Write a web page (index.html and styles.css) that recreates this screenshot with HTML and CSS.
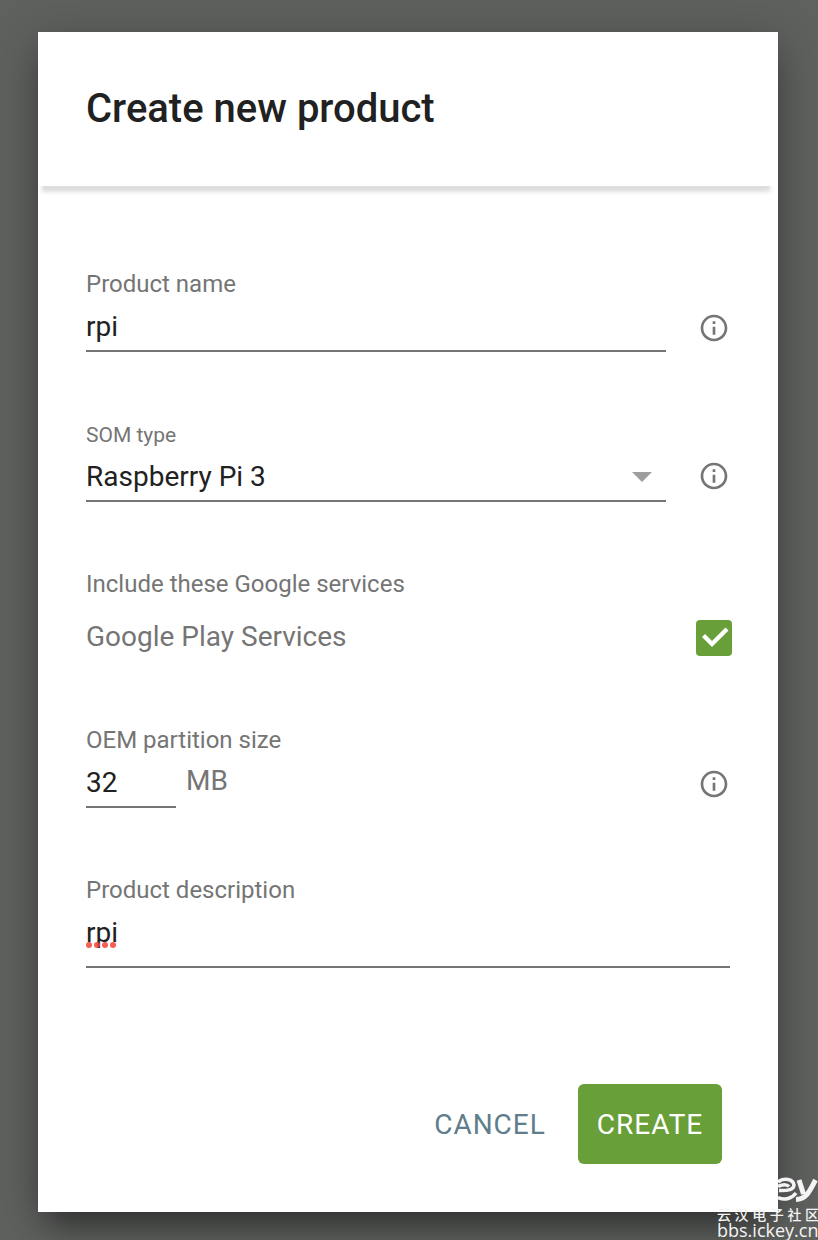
FILE: index.html
```html
<!DOCTYPE html>
<html lang="en">
<head>
<meta charset="utf-8">
<title>Create new product</title>
<link rel="stylesheet" href="styles.css">
</head>
<body>
<svg class="symbols" width="0" height="0">
  <symbol id="info" viewBox="0 0 24 24"><path d="M11 17h2v-6h-2v6zm1-15C6.480 2 2 6.480 2 12s4.480 10 10 10 10-4.480 10-10S17.520 2 12 2zm0 18c-4.410 0-8-3.590-8-8s3.590-8 8-8 8 3.590 8 8-3.590 8-8 8zM11 9h2V7h-2v2z"/></symbol>
</svg>
<main class="dialog">
  <header class="dialog-header"><h1 class="title">Create new product</h1></header>
  <div class="header-shadow"><div class="header-shadow-bar"></div></div>
  <form class="form">
    <div class="field name-field">
      <div class="field-main">
        <div class="label">Product name</div>
        <div class="value">rpi</div>
      </div>
      <svg class="info"><use href="#info"/></svg>
    </div>
    <div class="field som-field">
      <div class="field-main">
        <div class="label label-small">SOM type</div>
        <div class="value select"><span>Raspberry Pi 3</span><svg class="arrow" viewBox="0 0 20 10"><path d="M0 0h20L10 10z"/></svg></div>
      </div>
      <svg class="info info-raised"><use href="#info"/></svg>
    </div>
    <div class="services">
      <div class="label">Include these Google services</div>
      <div class="service-row">
        <span class="service-name">Google Play Services</span>
        <span class="checkbox"><svg viewBox="0 0 36 36"><path d="M7.500 15.500l8.500 8.500L31 9"/></svg></span>
      </div>
    </div>
    <div class="field oem-field">
      <div class="size-main">
        <div class="label">OEM partition size</div>
        <div class="size-row"><div class="value size-value">32</div><span class="unit">MB</span></div>
      </div>
      <svg class="info"><use href="#info"/></svg>
    </div>
    <div class="description">
      <div class="label">Product description</div>
      <div class="value description-value"><span class="misspelled">rpi<svg class="dots" viewBox="0 0 32 6"><circle cx="3" cy="3" r="3"/><circle cx="11" cy="3" r="3"/><circle cx="19" cy="3" r="3"/><circle cx="27" cy="3" r="3"/></svg></span></div>
    </div>
  </form>
  <footer class="actions">
    <button class="button cancel">CANCEL</button>
    <button class="button create">CREATE</button>
  </footer>
</main>
<div class="watermark">
  <svg class="mark" viewBox="0 0 40 30">
    <path class="mark-e" d="M0 6C6 1.500 15 3 16 9C16 13.500 10 15 1 14.500M0 10.500C4 8 9 8 11 10.500M0 21.500C7 24.500 14 22.500 18 17"/>
    <path class="mark-y" d="M21 4l4.500 14M37.500 4C32 14 29 23 18 23.500"/>
  </svg>
  <div class="mark-cn">云汉电子社区</div>
  <div class="mark-url">bbs.ickey.cn</div>
</div>
</body>
</html>
```
FILE: styles.css
```css
* { box-sizing: border-box; }
body {
  margin: 0;
  width: 818px;
  height: 1240px;
  padding: 32px 40px 28px 38px;
  position: relative;
  overflow: hidden;
  background: #5f615f;
  font-family: Roboto, "Liberation Sans", sans-serif;
  color: #212121;
}
.symbols { position: absolute; }
.dialog {
  width: 740px;
  height: 1180px;
  display: flex;
  flex-direction: column;
  background: #fff;
  box-shadow: 0 22px 30px -10px rgba(0,0,0,.4), 0 8px 44px rgba(0,0,0,.24);
}
.dialog-header { height: 154px; padding: 49px 48px 0; }
.title { margin: 0; font-size: 40px; line-height: 56px; font-weight: 500; white-space: nowrap; }
.header-shadow { height: 10px; overflow: hidden; padding: 0 8px 0 4px; }
.header-shadow-bar { height: 3px; margin: 0 1px; background: #dedede; box-shadow: 0 1px 5px 1px #cfcfcf; }
.form { padding: 72px 48px 0; }
.field { display: flex; justify-content: space-between; align-items: flex-end; }
.field-main { width: 580px; }
.label { height: 32px; line-height: 32px; font-size: 24px; color: #757575; white-space: nowrap; }
.label-small { font-size: 21px; }
.value { height: 52px; padding-top: 4px; border-bottom: 2px solid #757575; font-size: 28px; line-height: 46px; white-space: nowrap; }
.info { width: 32px; height: 32px; margin-bottom: 8px; fill: #757575; }
.info-raised { margin-bottom: 10px; }
.som-field { margin-top: 67px; }
.som-field .value { height: 51px; padding-top: 3px; }
.select { display: flex; justify-content: space-between; }
.arrow { width: 20px; height: 10px; margin: 18px 14px 0 0; fill: #9e9e9e; }
.services { margin-top: 66px; }
.service-row { display: flex; justify-content: space-between; align-items: center; height: 36px; margin: 20px -2px 0 0; }
.service-name, .unit { font-size: 28px; line-height: 36px; color: #757575; }
.service-name { padding-bottom: 2px; }
.checkbox { width: 36px; height: 36px; border-radius: 4px; background: #689f38; }
.checkbox svg { display: block; width: 36px; height: 36px; fill: none; stroke: #fff; stroke-width: 4.300; }
.oem-field { margin-top: 68px; }
.size-row { display: flex; gap: 10px; }
.size-value { width: 90px; }
.unit { margin-top: 7px; }
.description { margin-top: 66px; }
.description-value { height: 62px; }
.misspelled { position: relative; }
.dots { position: absolute; left: 0; bottom: 1px; width: 32px; height: 6px; fill: #f44336; opacity: .85; }
.actions { display: flex; justify-content: flex-end; padding-right: 56px; margin-top: 116px; }
.button { height: 80px; border: 0; padding: 0; background: none; font-family: inherit; font-size: 28px; letter-spacing: 1px; }
.cancel { width: 144px; margin-right: 16px; color: #607d8b; }
.create { width: 144px; border-radius: 6px; background: #689f38; color: #fff; }
.watermark { position: absolute; left: 716px; top: 1176px; width: 102px; height: 64px; color: #f4f4f4; }
.mark { position: absolute; left: 62px; top: 0; width: 40px; height: 30px; fill: none; stroke: #f4f4f4; }
.mark-e { stroke-width: 3.5; }
.mark-y { stroke-width: 5; }
.mark-cn { position: absolute; left: 1px; top: 31px; font: 500 14px/14px "Noto Sans CJK SC", sans-serif; letter-spacing: 3.600px; white-space: nowrap; }
.mark-url { position: absolute; left: 1px; top: 45px; font: 18px/18px "Open Sans", sans-serif; white-space: nowrap; }
```
